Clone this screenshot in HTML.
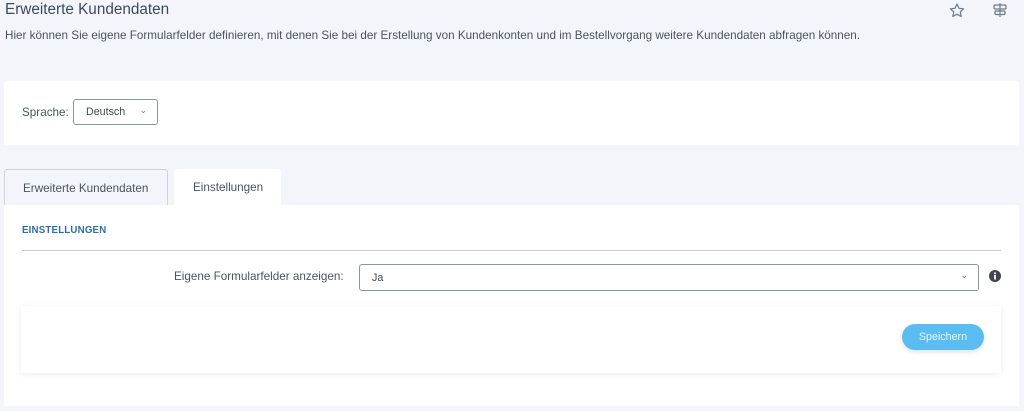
<!DOCTYPE html>
<html><head><meta charset="utf-8"><style>
*{box-sizing:border-box;margin:0;padding:0}
body{width:1024px;height:411px;background:#f3f5fa;font-family:"Liberation Sans",sans-serif;color:#4a5560;position:relative;overflow:hidden}
.a{position:absolute}
</style></head><body>
<div class="a" style="left:5px;top:1px;font-size:15.3px;color:#3d4b5a;font-weight:500">Erweiterte Kundendaten</div>
<div class="a" style="left:5px;top:29px;font-size:11.7px;color:#4a5560">Hier können Sie eigene Formularfelder definieren, mit denen Sie bei der Erstellung von Kundenkonten und im Bestellvorgang weitere Kundendaten abfragen können.</div>
<svg class="a" style="left:949px;top:3px" width="16" height="15" viewBox="0 0 16 15"><path d="M8 1l2 4.3 4.6.5-3.4 3.1 1 4.6L8 11.2 3.8 13.5l1-4.6L1.4 5.8 6 5.3z" fill="none" stroke="#6a7a8a" stroke-width="1.2" stroke-linejoin="round"/></svg>
<svg class="a" style="left:992px;top:2px" width="16" height="16" viewBox="0 0 16 16" fill="none" stroke="#6a7a8a" stroke-width="1.2"><path d="M8 1v14"/><rect x="2" y="3" width="12" height="4" rx="1"/><rect x="3" y="9" width="10" height="3.5" rx="1"/></svg>
<div class="a" style="left:4px;top:81px;width:1015px;height:64px;background:#fff;border-radius:3px"></div>
<div class="a" style="left:22px;top:106px;font-size:11.7px">Sprache:</div>
<div class="a" style="left:73px;top:99px;width:85px;height:26px;border:1px solid #8a96a3;border-radius:3px;background:#fff;font-size:10.7px;padding:6px 0 0 12px;color:#3d4b5a">Deutsch<span style="position:absolute;right:10px;top:5px;font-size:9px;color:#777">⌄</span></div>
<div class="a" style="left:4px;top:169px;width:164px;height:37px;border:1px solid #cfd4da;border-bottom:none;border-radius:3px 3px 0 0;background:#f3f5fa;font-size:11.7px;padding:12px 0 0 18px">Erweiterte Kundendaten</div>
<div class="a" style="left:174px;top:169px;width:107px;height:37px;background:#fff;border-radius:3px 3px 0 0;font-size:11.7px;padding:12px 0 0 19px">Einstellungen</div>
<div class="a" style="left:4px;top:205px;width:1015px;height:201px;background:#fff"></div>
<div class="a" style="left:22px;top:225px;font-size:9.7px;font-weight:bold;color:#2b6fa8;letter-spacing:.2px">EINSTELLUNGEN</div>
<div class="a" style="left:22px;top:250px;width:979px;height:1px;background:#c8ccd0"></div>
<div class="a" style="left:174px;top:270px;font-size:11.7px">Eigene Formularfelder anzeigen:</div>
<div class="a" style="left:359px;top:264px;width:620px;height:27px;border:1px solid #8a96a3;border-radius:3px;font-size:10.7px;padding:7px 0 0 12px;color:#3d4b5a">Ja<span style="position:absolute;right:10px;top:5px;font-size:9px;color:#777">⌄</span></div>
<svg class="a" style="left:989px;top:270px" width="12" height="12" viewBox="0 0 12 12"><circle cx="6" cy="6" r="6" fill="#3d4652"/><rect x="5.1" y="5" width="1.8" height="4.5" fill="#fff"/><circle cx="6" cy="3.2" r="1" fill="#fff"/></svg>
<div class="a" style="left:21px;top:306px;width:980px;height:67px;background:#fff;box-shadow:0 1px 6px rgba(0,0,0,.08)"></div>
<div class="a" style="left:902px;top:324px;width:82px;height:26px;background:#5bbcf2;border-radius:13px;color:#e8f6ff;font-size:10.7px;text-align:center;line-height:26px;box-shadow:0 2px 4px rgba(0,0,0,.12)">Speichern</div>
</body></html>
